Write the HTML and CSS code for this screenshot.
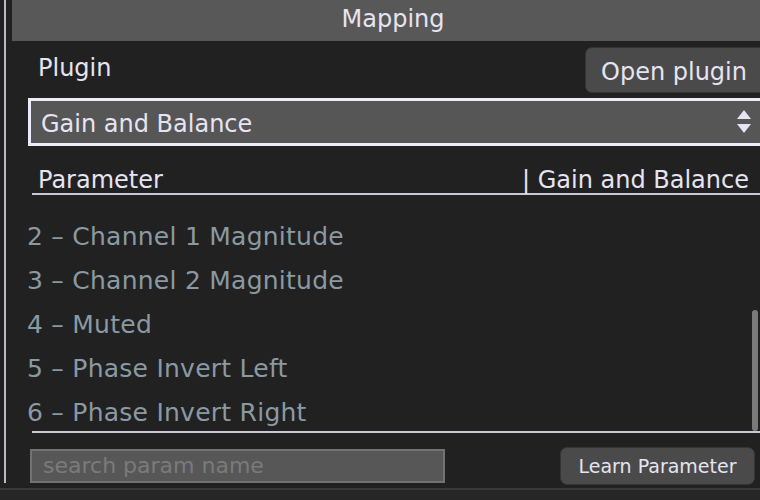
FILE: index.html
```html
<!DOCTYPE html>
<html>
<head>
<meta charset="utf-8">
<link rel="stylesheet" href="styles.css">
</head>
<body>
<div class="frame">
  <div class="gutter"><div class="vline"></div></div>
  <div class="panel">
    <div class="header">Mapping</div>
    <div class="plugin-row">
      <span class="label">Plugin</span>
      <button class="btn open-btn">Open plugin</button>
    </div>
    <div class="select">
      <span class="select-text">Gain and Balance</span>
      <svg class="arrows" width="16" height="26" viewBox="0 0 16 26">
        <polygon points="8,1 15,10 1,10" fill="#e6e4f2"/>
        <polygon points="1,15 15,15 8,24" fill="#e6e4f2"/>
      </svg>
    </div>
    <div class="param-head">
      <span>Parameter</span>
      <span>| Gain and Balance</span>
    </div>
    <div class="list">
      <div class="row">2 – Channel 1 Magnitude</div>
      <div class="row">3 – Channel 2 Magnitude</div>
      <div class="row">4 – Muted</div>
      <div class="row">5 – Phase Invert Left</div>
      <div class="row">6 – Phase Invert Right</div>
      <div class="scrollbar"></div>
    </div>
    <div class="footer">
      <div class="search">search param name</div>
      <button class="btn learn-btn">Learn Parameter</button>
    </div>
  </div>
</div>
<div class="bottom-strip"></div>
</body>
</html>
```
FILE: styles.css
```css
html, body {
  margin: 0;
  padding: 0;
}
body {
  width: 760px;
  height: 500px;
  overflow: hidden;
  background: #212121;
  font-family: "DejaVu Sans", Verdana, sans-serif;
  color: #e6e4f2;
}
.frame {
  display: flex;
  height: 488px;
}
.gutter {
  width: 12px;
  flex: none;
  padding-left: 4px;
  box-sizing: border-box;
}
.vline {
  width: 2px;
  height: 483px;
  background: #b9b8c6;
}
.panel {
  flex: 1;
  display: flex;
  flex-direction: column;
  min-width: 0;
}
.header {
  height: 41px;
  background: #585858;
  font-size: 24px;
  line-height: 38px;
  text-align: center;
  padding-left: 14px;
  box-sizing: border-box;
}
.plugin-row {
  display: flex;
  justify-content: space-between;
  align-items: center;
  margin-top: 6px;
  height: 46px;
  padding-left: 26px;
}
.label {
  font-size: 24px;
  margin-top: -5px;
}
.btn {
  font-family: "DejaVu Sans", Verdana, sans-serif;
  color: #e6e4f2;
  background: #4a4a4a;
  border: 1px solid #353535;
  border-radius: 7px;
  padding: 0;
}
.open-btn {
  width: 185px;
  height: 46px;
  font-size: 24px;
  text-align: left;
  padding-left: 15px;
  padding-top: 3px;
  margin-right: -10px;
}
.select {
  margin-top: 5px;
  margin-left: 16px;
  margin-right: -8px;
  height: 48px;
  box-sizing: border-box;
  border: 3px solid #ecebf8;
  background: #565656;
  display: flex;
  align-items: center;
  justify-content: space-between;
  padding-left: 10px;
  padding-right: 13px;
}
.select-text {
  font-size: 24px;
  padding-top: 3px;
}
.arrows {
  display: block;
}
.param-head {
  margin-top: 16px;
  margin-left: 20px;
  height: 31px;
  display: flex;
  justify-content: space-between;
  align-items: flex-end;
  font-size: 24px;
  line-height: 26px;
  padding-left: 6px;
  padding-right: 11px;
  border-bottom: 2px solid #c9c8d6;
}
.list {
  position: relative;
  height: 236px;
  overflow: hidden;
  padding-top: 21px;
  box-sizing: border-box;
  padding-left: 15px;
}
.row {
  height: 44px;
  line-height: 42px;
  font-size: 25px;
  letter-spacing: 0.25px;
  color: #8a9aa4;
  white-space: nowrap;
}
.scrollbar {
  position: absolute;
  left: 740px;
  top: 115px;
  width: 6px;
  height: 121px;
  border-radius: 3px;
  background: #7a7a7a;
}
.footer {
  border-top: 2px solid #c9c8d6;
  margin-left: 20px;
  display: flex;
  justify-content: space-between;
  align-items: center;
  padding-top: 14px;
}
.search {
  margin-left: -2px;
  width: 415px;
  height: 34px;
  box-sizing: border-box;
  background: #575757;
  border: 2px solid #727272;
  color: #7b7b7b;
  font-size: 22px;
  line-height: 29px;
  padding-left: 11px;
}
.learn-btn {
  width: 195px;
  height: 38px;
  font-size: 19px;
  margin-right: 5px;
}
.bottom-strip {
  height: 12px;
  border-top: 2px solid #3a3a3a;
  background: #262626;
}
```
